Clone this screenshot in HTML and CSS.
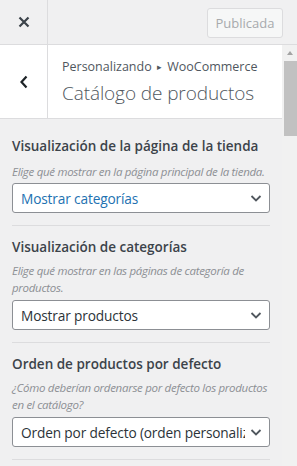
FILE: index.html
```html
<!DOCTYPE html>
<html lang="es">
<head>
  <meta charset="UTF-8" />
  <meta name="viewport" content="width=device-width, initial-scale=1.0"/>
  <title>Catálogo de productos</title>
  <link rel="stylesheet" href="styles.css">
</head>
<body>

<div class="customizer">
  <div class="header">
    <button class="close" aria-label="Cerrar">
      <svg width="12" height="12" viewBox="0 0 12 12"><path d="M1.5 1.5 L10.5 10.5 M10.5 1.5 L1.5 10.5" stroke="#3c434a" stroke-width="2.2" fill="none"/></svg>
    </button>
    <div class="actions">
      <button class="publish" disabled>Publicada</button>
    </div>
  </div>

  <div class="body">
    <div class="panel">
      <div class="section-head">
        <button class="back" aria-label="Volver">
          <svg width="10" height="14" viewBox="0 0 10 14"><path d="M7.5 1.5 L2.5 7 L7.5 12.5" stroke="#1d2327" stroke-width="2.2" fill="none"/></svg>
        </button>
        <div class="titles">
          <span class="crumb">Personalizando <span class="sep">&#9656;</span> WooCommerce</span>
          <h2>Catálogo de productos</h2>
        </div>
      </div>

      <ul class="controls">
        <li class="control first">
          <span class="label">Visualización de la página de la tienda</span>
          <span class="desc">Elige qué mostrar en la página principal de la tienda.</span>
          <div class="select focus">
            <span class="value">Mostrar categorías</span>
            <svg width="14" height="14" viewBox="0 0 14 14"><path d="M2.5 5 L7 9.5 L11.5 5" stroke="#50575e" stroke-width="1.8" fill="none"/></svg>
          </div>
        </li>
        <li class="control">
          <span class="label">Visualización de categorías</span>
          <span class="desc">Elige qué mostrar en las páginas de categoría de productos.</span>
          <div class="select">
            <span class="value">Mostrar productos</span>
            <svg width="14" height="14" viewBox="0 0 14 14"><path d="M2.5 5 L7 9.5 L11.5 5" stroke="#50575e" stroke-width="1.8" fill="none"/></svg>
          </div>
        </li>
        <li class="control">
          <span class="label">Orden de productos por defecto</span>
          <span class="desc">¿Cómo deberían ordenarse por defecto los productos en el catálogo?</span>
          <div class="select">
            <span class="value">Orden por defecto (orden personalizado + nombre)</span>
            <svg width="14" height="14" viewBox="0 0 14 14"><path d="M2.5 5 L7 9.5 L11.5 5" stroke="#50575e" stroke-width="1.8" fill="none"/></svg>
          </div>
        </li>
      </ul>
    </div>

    <div class="scrollbar">
      <span class="arrow"></span>
      <span class="thumb"></span>
    </div>
  </div>
</div>

</body>
</html>
```

FILE: styles.css
```css
body {
  margin: 0;
  background: #f0f0f1;
  color: #3c434a;
  font-family: 'Open Sans', 'Noto Sans', sans-serif;
  overflow: hidden;
}

.customizer {
  width: 297px;
  height: 466px;
  overflow: hidden;
}

.header {
  display: flex;
  height: 44px;
  border-bottom: 1px solid #dcdcde;
}

.close {
  width: 48px;
  height: 44px;
  padding: 0;
  border: none;
  border-right: 1px solid #dcdcde;
  background: none;
  display: flex;
  align-items: center;
  justify-content: center;
}

.actions {
  flex: 1;
  display: flex;
  justify-content: flex-end;
  align-items: center;
  padding-right: 14px;
}

.publish {
  height: 30px;
  width: 76px;
  padding: 0;
  margin-top: 1px;
  border: 1px solid #dcdcde;
  border-radius: 3px;
  background: #f6f7f7;
  color: #a7aaad;
  font-family: inherit;
  font-size: 13px;
}

.body {
  display: flex;
}

.panel {
  flex: 1;
  min-width: 0;
}

.section-head {
  display: flex;
  height: 73px;
  background: #fff;
  border-bottom: 1px solid #dcdcde;
}

.back {
  width: 48px;
  padding: 0;
  border: none;
  border-right: 1px solid #dcdcde;
  background: none;
  display: flex;
  align-items: center;
  justify-content: center;
}

.titles {
  display: flex;
  flex-direction: column;
  padding: 13px 0 0 14px;
  color: #50575e;
}

.crumb {
  font-size: 12.5px;
  line-height: 18px;
}

.crumb .sep {
  font-size: 9px;
  vertical-align: 1px;
  margin: 0 2px;
}

.titles h2 {
  margin: 4px 0 0;
  font-size: 19px;
  font-weight: 300;
  line-height: 26px;
  letter-spacing: -0.1px;
}

.controls {
  list-style: none;
  margin: 0;
  padding: 5px 12px 0;
}

.control {
  display: flex;
  flex-direction: column;
  padding: 12px 0 12px;
  border-bottom: 1px solid #dcdcde;
}

.control + .control {
  padding-top: 11px;
}

.label {
  font-size: 13.5px;
  font-weight: 600;
  line-height: 20px;
  color: #3c434a;
}

.desc {
  margin: 5px 0 4px;
  font-size: 11.5px;
  font-style: italic;
  line-height: 17px;
  letter-spacing: -0.3px;
  color: #8c8f94;
}

.first .desc {
  margin: 7px 0 3px;
}

.select {
  display: flex;
  align-items: center;
  height: 28px;
  padding: 0 6px 0 8px;
  border: 1px solid #8c8f94;
  border-radius: 3px;
  background: #fff;
  gap: 4px;
}

.select .value {
  flex: 1;
  min-width: 0;
  overflow: hidden;
  white-space: nowrap;
  font-size: 13.7px;
  letter-spacing: -0.15px;
  color: #2c3338;
}

.select.focus .value {
  color: #2271b1;
}

.select svg {
  flex-shrink: 0;
}

.scrollbar {
  width: 15px;
  height: 421px;
  background: #f1f1f1;
  display: flex;
  flex-direction: column;
  align-items: flex-end;
}

.arrow {
  width: 0;
  height: 0;
  margin: 6px 4px 0 0;
  border-left: 3.5px solid transparent;
  border-right: 3.5px solid transparent;
  border-bottom: 4px solid #a3a3a3;
}

.thumb {
  width: 13px;
  height: 75px;
  margin-top: 6px;
  background: #c1c1c1;
}
```
